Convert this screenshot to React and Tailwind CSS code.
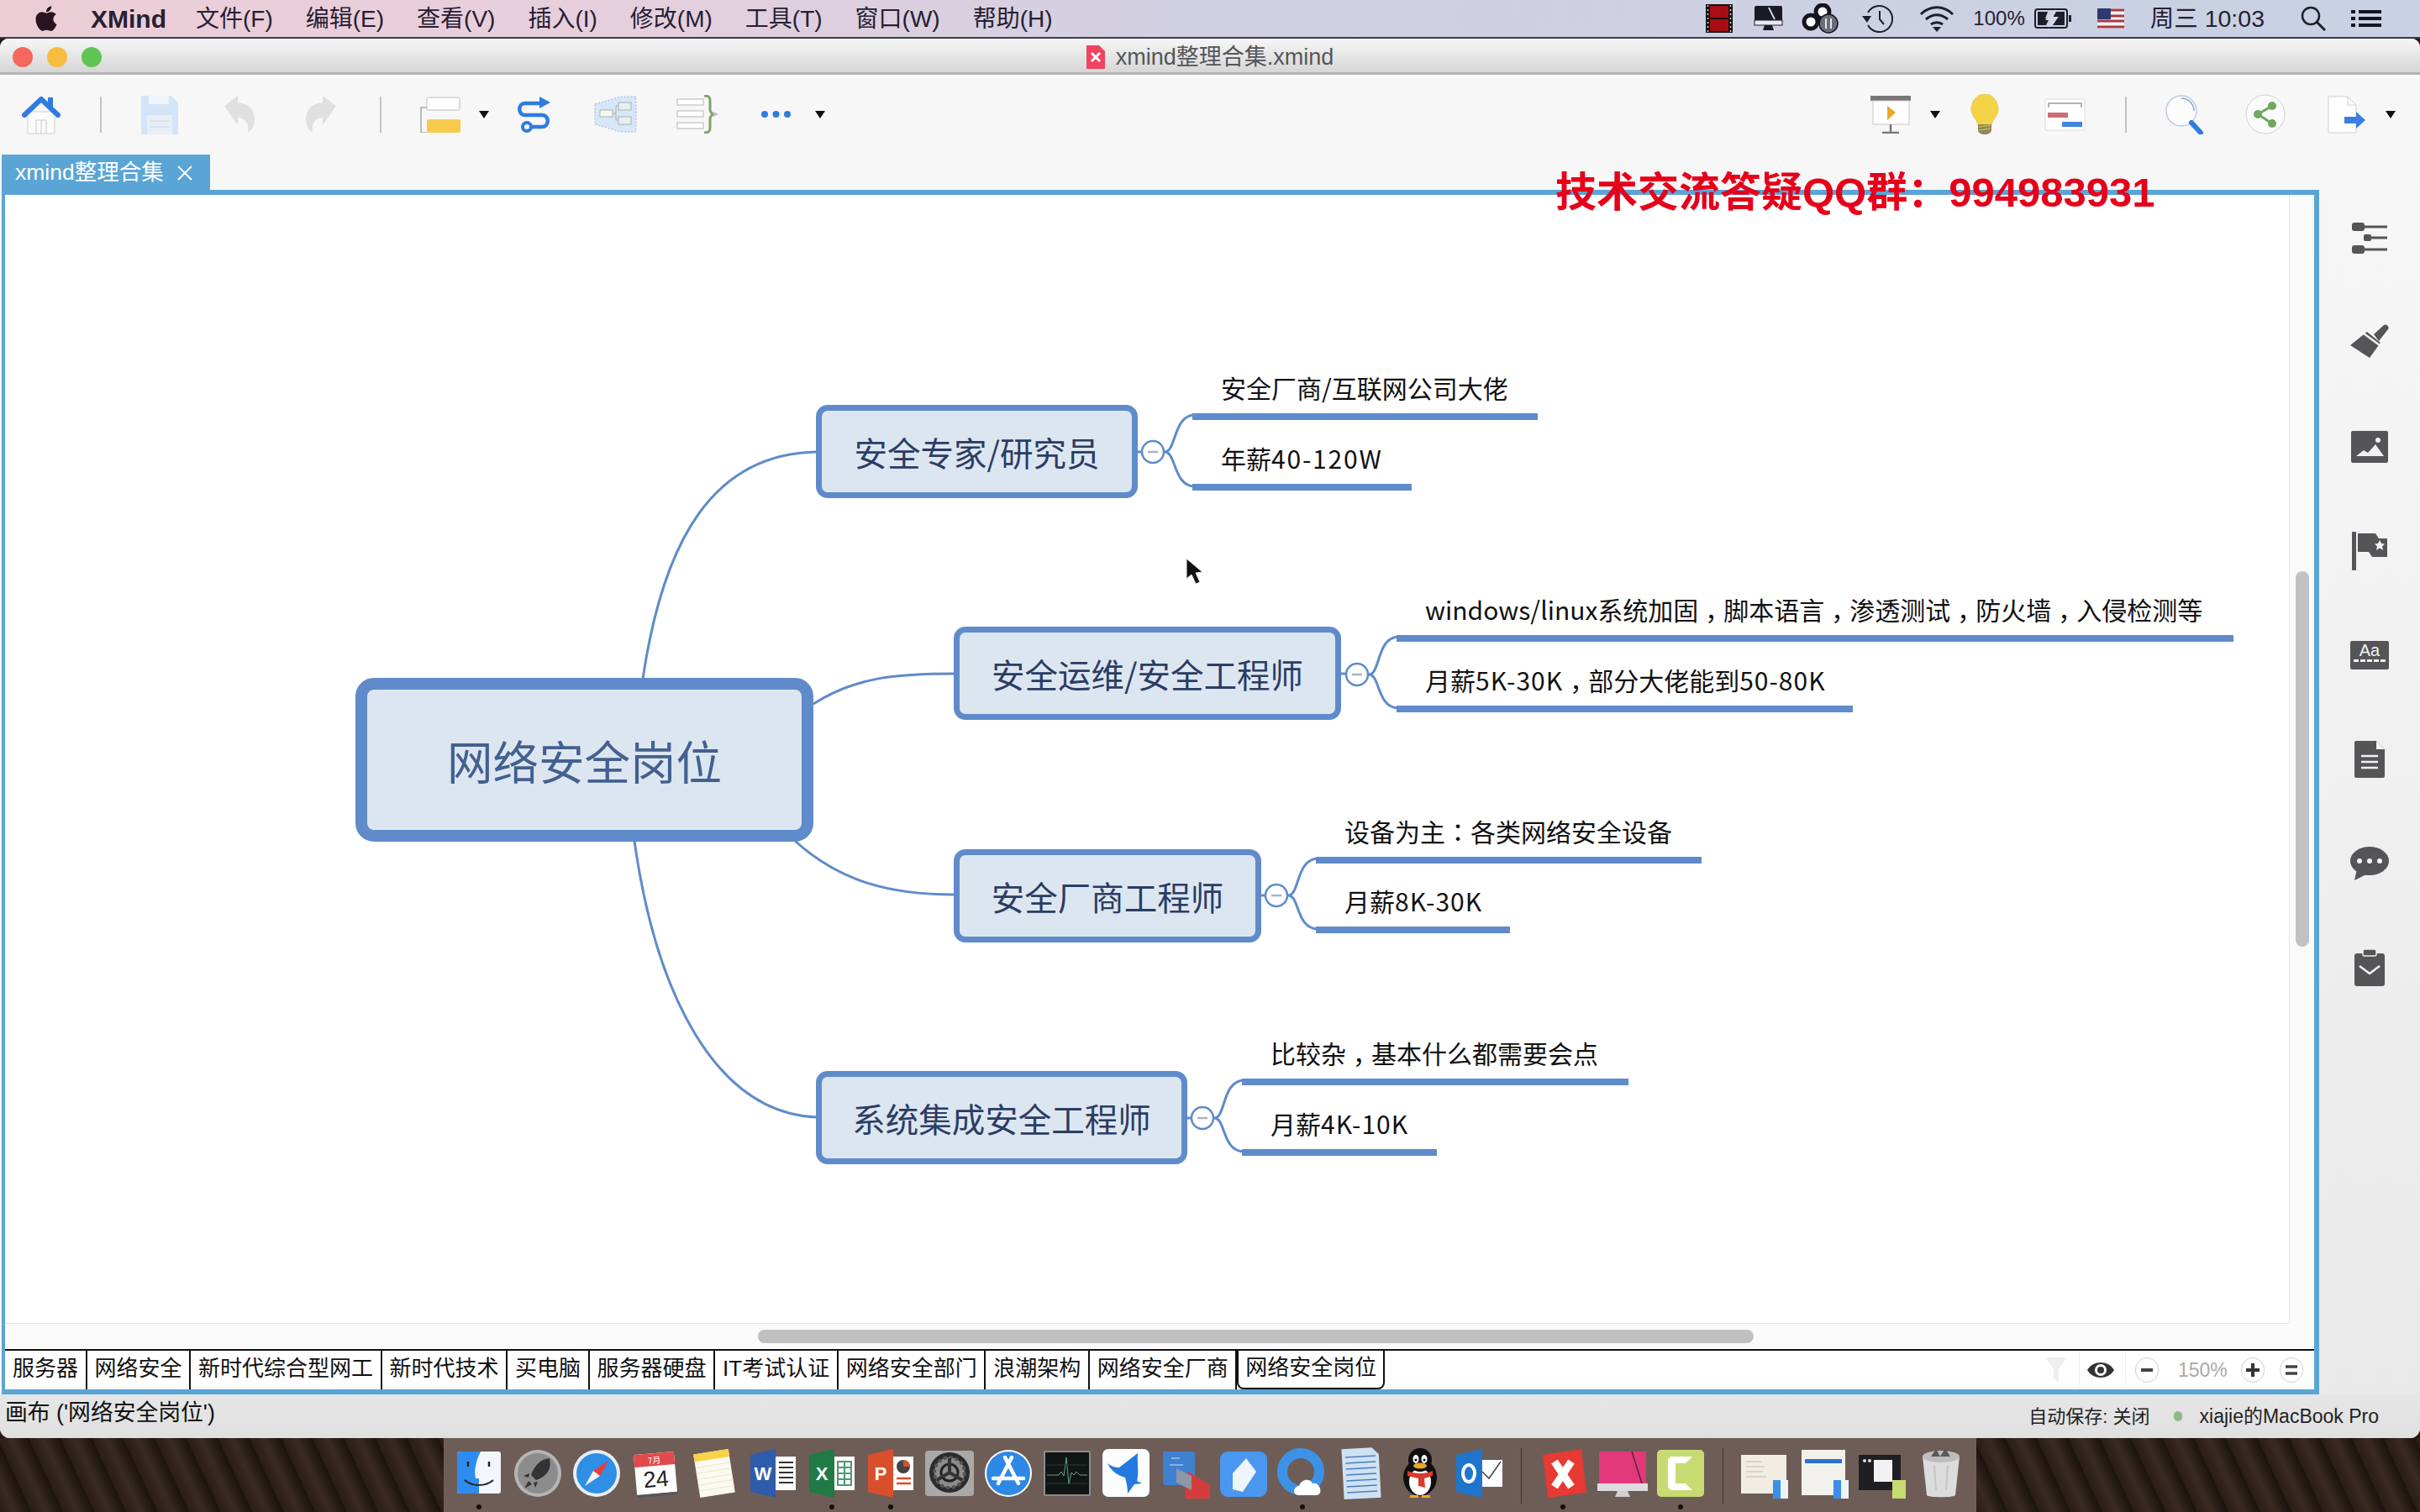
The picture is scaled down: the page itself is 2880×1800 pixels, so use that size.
import React from "react";
import { FaApple } from "react-icons/fa";

const B = "#5f8bca";
const Caret = ({ c = "" }) => (
  <svg width="12" height="10" viewBox="0 0 12 10" className={c}><path d="M0 1h12L6 10z" fill="#111" /></svg>
);
const Sep = ({ c = "" }) => <div className={`w-[2px] h-[43px] bg-[#c4c4c4] ${c}`} />;

const Home = () => (
  <svg width="48" height="47" viewBox="0 0 48 47" className="ml-[25px]">
    <rect x="8" y="20" width="32" height="26" fill="#fbfbfb" stroke="#cfcfcf" />
    <path d="M18 46V30h12v16M24 30v16" fill="none" stroke="#c8c8c8" />
    <rect x="32" y="3" width="6" height="12" fill="#2f7be0" />
    <path d="M4 24 24 5l20 19" fill="none" stroke="#2f7be0" strokeWidth="6" strokeLinecap="round" strokeLinejoin="round" />
  </svg>
);
const Save = () => (
  <svg width="44" height="47" viewBox="0 0 44 47" className="ml-[47px]">
    <path d="M0 1h36l8 8v38H0z" fill="#d4e4f7" />
    <rect x="9" y="1" width="24" height="10" fill="#eef4fb" />
    <rect x="7" y="24" width="30" height="23" fill="#e8eef6" />
    <path d="M10 31h24M10 38h24" stroke="#d4e4f7" strokeWidth="2" />
  </svg>
);
const Undo = ({ flip, c }) => (
  <svg width="36" height="44" viewBox="0 0 36 44" className={c} style={flip ? { transform: "scaleX(-1)" } : undefined}>
    <path d="M0 12 16 0v8c14 1 20 10 20 20 0 7-3 12-8 16 2-9-2-18-12-18v9z" fill="#e0e0e0" />
  </svg>
);
const TableIcon = () => (
  <svg width="48" height="43" viewBox="0 0 48 43" className="ml-[46px]">
    <path d="M8 13H1v30h7" fill="none" stroke="#bbb" strokeWidth="2" />
    <rect x="8" y="1" width="39" height="15" rx="1.5" fill="#fff" stroke="#bdbdbd" />
    <rect x="8" y="27" width="40" height="16" rx="2" fill="#f8cb4e" />
  </svg>
);
const Swirl = () => (
  <svg width="45" height="43" viewBox="0 0 45 43" className="ml-[31px]">
    <path d="M30 8H12C3 8 3 22 12 22h20c9 0 9 14 0 14H18" fill="none" stroke="#2f7be0" strokeWidth="4.5" />
    <path d="M29 0l13 7-13 7z" fill="#2f7be0" />
    <circle cx="14" cy="36" r="5" fill="#fff" stroke="#2f7be0" strokeWidth="4" />
  </svg>
);
const Boundary = () => (
  <svg width="51" height="44" viewBox="0 0 51 44" className="ml-[49px]">
    <path d="M1 10 32 1h18v42H32L1 34z" fill="#d7e6f9" stroke="#9db4d2" strokeWidth="1" strokeDasharray="2 2" />
    <rect x="7" y="17" width="15" height="8" fill="#f4f8f2" stroke="#a3b5a0" />
    <rect x="29" y="8" width="15" height="9" fill="#e7eff4" stroke="#a3b5a0" />
    <rect x="29" y="25" width="15" height="9" fill="#e7eff4" stroke="#a3b5a0" />
    <path d="M22 21h4M26 12v17h3M26 12h3" stroke="#a3b5a0" fill="none" />
  </svg>
);
const Brace = () => (
  <svg width="52" height="46" viewBox="0 0 52 46" className="ml-[47px]">
    <rect x="1" y="5" width="31" height="7" fill="#fff" stroke="#b5b5b5" />
    <rect x="1" y="19" width="31" height="7" fill="#fff" stroke="#b5b5b5" />
    <rect x="1" y="33" width="31" height="7" fill="#fff" stroke="#b5b5b5" />
    <path d="M33 1c6 0 7 2 7 6v10c0 3 2 5 4 6-2 1-4 3-4 6v10c0 4-1 6-7 6" fill="none" stroke="#7fa56a" strokeWidth="3" />
    <path d="M44 20l6 3-6 3z" fill="#bbb" />
  </svg>
);
const Dots = () => (
  <svg width="37" height="10" viewBox="0 0 37 10" className="ml-[48px]">
    <circle cx="5" cy="5" r="4" fill="#2f7be0" /><circle cx="18.5" cy="5" r="4" fill="#2f7be0" /><circle cx="32" cy="5" r="4" fill="#2f7be0" />
  </svg>
);
const Present = () => (
  <svg width="48" height="46" viewBox="0 0 48 46">
    <rect x="0" y="1" width="48" height="6" fill="#777" />
    <rect x="3" y="7" width="43" height="28" fill="#fff" stroke="#c8c8c8" />
    <path d="M20 13l10 8-10 9z" fill="#eda62c" />
    <path d="M24 35v9M14 45h20" stroke="#777" strokeWidth="2.5" />
  </svg>
);
const Bulb = () => (
  <svg width="34" height="48" viewBox="0 0 34 48" className="ml-[36px]">
    <path d="M17 0C7 0 1 9 1 18c0 8 7 12 8 19h16c1-7 8-11 8-19C33 9 27 0 17 0z" fill="#f4d347" stroke="#e8c85a" />
    <path d="M9 36h16v7c0 3-4 5-8 5s-8-2-8-5z" fill="#8e8560" />
    <path d="M10 39l14-2M10 43l14-2" stroke="#c9b04d" strokeWidth="1.5" />
  </svg>
);
const Gantt = () => (
  <svg width="49" height="39" viewBox="0 0 49 39" className="ml-[54px]">
    <rect x="1" y="1" width="47" height="37" rx="2" fill="#fff" stroke="#dcdcdc" />
    <path d="M5 11V6h39v5" fill="none" stroke="#999" strokeWidth="1.5" />
    <rect x="4" y="17" width="24" height="6" fill="#cf6b78" />
    <rect x="21" y="28" width="24" height="6" fill="#3f86de" />
  </svg>
);
const Search2 = () => (
  <svg width="46" height="47" viewBox="0 0 46 47" className="ml-[46px]">
    <circle cx="19" cy="19" r="18" fill="#fdfdfd" stroke="#bdcbe0" strokeWidth="1.5" />
    <path d="M19 4a15 15 0 0 1 15 15" fill="none" stroke="#8aa5c9" strokeWidth="1.5" />
    <path d="M31 33l11 12" stroke="#2f7be0" strokeWidth="6" strokeLinecap="round" />
  </svg>
);
const Share = () => (
  <svg width="48" height="48" viewBox="0 0 48 48" className="ml-[49px]">
    <circle cx="24" cy="24" r="23" fill="#fbfbfb" stroke="#cfcfcf" />
    <path d="M32 14 15 24l17 11" fill="none" stroke="#6fa85e" strokeWidth="3" />
    <circle cx="32" cy="14" r="5" fill="#6fa85e" /><circle cx="15" cy="24" r="5" fill="#6fa85e" /><circle cx="32" cy="35" r="5" fill="#6fa85e" />
  </svg>
);
const ExportI = () => (
  <svg width="46" height="45" viewBox="0 0 46 45" className="ml-[50px]">
    <path d="M1 1h23l10 10v33H1z" fill="#fff" stroke="#cfcfcf" />
    <path d="M24 1v10h10" fill="none" stroke="#cfcfcf" />
    <path d="M20 25h14v-6l11 10-11 10v-6H20z" fill="#3a80e0" />
  </svg>
);

const Film = () => (
  <svg width="32" height="34" viewBox="0 0 32 34">
    <rect width="32" height="34" fill="#111" />
    <rect x="5" y="2" width="22" height="14" fill="#a80d14" /><rect x="5" y="18" width="22" height="14" fill="#a80d14" />
    <path d="M2.5 1v32M29.5 1v32" stroke="#ddd" strokeWidth="1.5" strokeDasharray="2 3" />
  </svg>
);
const IMac = () => (
  <svg width="35" height="30" viewBox="0 0 35 30" className="ml-[25px]">
    <rect x="1" y="0" width="33" height="23" rx="2" fill="#1a1a24" />
    <path d="M18 2l7 14" stroke="#cfd4e4" strokeWidth="2" />
    <rect x="1" y="17" width="33" height="6" fill="#e9e9f0" stroke="#1a1a24" />
    <path d="M13 23h9l2 6H11z" fill="#1a1a24" />
  </svg>
);
const CC = () => (
  <svg width="46" height="36" viewBox="0 0 46 36" className="ml-[22px]">
    <circle cx="25" cy="10" r="8" fill="#fff" stroke="#151520" strokeWidth="5" />
    <circle cx="11" cy="22" r="8" fill="#fff" stroke="#151520" strokeWidth="5" />
    <circle cx="32" cy="24" r="11" fill="#6c6f7a" stroke="#151520" strokeWidth="1.5" />
    <path d="M29 18v12M35 18v12" stroke="#e6e6ee" strokeWidth="2" />
  </svg>
);
const TM = () => (
  <svg width="37" height="34" viewBox="0 0 37 34" className="ml-[26px]">
    <path d="M7 10A15.5 15.5 0 1 1 7 25" fill="none" stroke="#1e1e2a" strokeWidth="2" />
    <path d="M0 14h11l-5 8z" fill="#1e1e2a" />
    <path d="M21 8v10l5 6" fill="none" stroke="#1e1e2a" strokeWidth="2" />
  </svg>
);
const Wifi = () => (
  <svg width="42" height="32" viewBox="0 0 42 32" className="ml-[31px]">
    <path d="M2 11c11-11 27-11 38 0M8 17c8-7 18-7 26 0M14 23c4-3 10-3 14 0" fill="none" stroke="#1e1e2a" strokeWidth="3" />
    <path d="M21 32l-5-6h10z" fill="#1e1e2a" />
  </svg>
);
const Batt = () => (
  <svg width="44" height="24" viewBox="0 0 44 24" className="ml-[11px]">
    <rect x="1" y="1" width="38" height="22" rx="3" fill="none" stroke="#1e1e2a" strokeWidth="2" />
    <rect x="41" y="8" width="3" height="8" fill="#1e1e2a" />
    <path d="M4 4h12l-3 8h5l-4 8H4zM26 4h10v16H22l6-9h-6z" fill="#1e1e2a" />
    <path d="M25 1 13 14h7l-3 9 12-13h-7z" fill="#d5d7e8" />
  </svg>
);
const Flag = () => (
  <svg width="32" height="24" viewBox="0 0 32 24" className="ml-[31px]">
    <rect width="32" height="24" fill="#f2f2f2" />
    <path d="M0 2h32M0 9h32M0 15h32M0 22h32" stroke="#a83a44" strokeWidth="3" />
    <rect width="16" height="13" fill="#2e3a6e" />
  </svg>
);
const MagM = () => (
  <svg width="30" height="30" viewBox="0 0 30 30" className="ml-[43px]">
    <circle cx="12" cy="12" r="10" fill="none" stroke="#1e1e2a" strokeWidth="2.5" />
    <path d="M19 19l10 10" stroke="#1e1e2a" strokeWidth="3" />
  </svg>
);
const ListM = () => (
  <svg width="36" height="20" viewBox="0 0 36 20" className="ml-[30px]">
    <path d="M0 2h5M0 10h5M0 18h5" stroke="#151520" strokeWidth="4" />
    <path d="M9 2h27M9 10h27M9 18h27" stroke="#151520" strokeWidth="4" />
  </svg>
);

const G = "#555558";
const SideIcons = [
  <svg key="1" width="42" height="38" viewBox="0 0 42 38"><rect x="0" y="0" width="15" height="10" rx="3" fill={G} /><rect x="14" y="14" width="9" height="8" rx="2" fill={G} /><rect x="0" y="27" width="15" height="10" rx="3" fill={G} /><path d="M15 5h27M23 18h19M15 32h27" stroke={G} strokeWidth="3" /></svg>,
  <svg key="2" width="46" height="46" viewBox="0 0 46 46"><path d="M0 26 20 10l16 13-13 18z" fill={G} /><path d="M16 12l19 14" stroke="#f2f2f2" strokeWidth="2.5" /><path d="M28 13 40 2c3-2 7 2 5 5L34 21z" fill={G} /></svg>,
  <svg key="3" width="44" height="38" viewBox="0 0 44 38"><rect width="44" height="38" rx="2" fill={G} /><path d="M6 30l9-7 5 3 9-10 10 14z" fill="#f2f2f2" /><circle cx="32" cy="11" r="3" fill="#f2f2f2" /></svg>,
  <svg key="4" width="42" height="46" viewBox="0 0 42 46"><rect width="5" height="46" rx="1" fill={G} /><path d="M7 2h21l4 6h10v22H24l-4-6H7z" fill={G} /><path d="M33 10l2 4 4 .5-3 3 1 4.500-4-2.500-4 2.500 1-4.500-3-3 4-.5z" fill="#f2f2f2" /></svg>,
  <div key="5" className="w-[46px] h-[34px] rounded-[2px] bg-[#555558] flex flex-col items-center text-[#f2f2f2]"><span className="text-[20px] leading-[22px]">Aa</span><span className="w-[38px] border-t-[3px] border-dashed border-[#f2f2f2]" /></div>,
  <svg key="6" width="36" height="44" viewBox="0 0 36 44"><path d="M2 0h24l10 10v32a2 2 0 0 1-2 2H2a2 2 0 0 1-2-2V2a2 2 0 0 1 2-2z" fill={G} /><path d="M26 0v10h10" fill="#f2f2f2" /><path d="M8 18h20M8 25h20M8 32h20" stroke="#f2f2f2" strokeWidth="2.5" /></svg>,
  <svg key="7" width="46" height="40" viewBox="0 0 46 40"><ellipse cx="23" cy="17" rx="23" ry="17" fill={G} /><path d="M8 27 5 40l16-8z" fill={G} /><circle cx="11" cy="17" r="3" fill="#f2f2f2" /><circle cx="23" cy="17" r="3" fill="#f2f2f2" /><circle cx="35" cy="17" r="3" fill="#f2f2f2" /></svg>,
  <svg key="8" width="36" height="44" viewBox="0 0 36 44"><rect y="5" width="36" height="39" rx="3" fill={G} /><rect x="10" y="0" width="16" height="8" rx="2" fill={G} stroke="#f2f2f2" strokeWidth="1.5" /><path d="M6 20l12 9 12-9" fill="none" stroke="#f2f2f2" strokeWidth="2.5" /></svg>,
];

const Finder = <><rect x="4" y="4" width="52" height="50" rx="3" fill="#f3f6fb" /><path d="M4 7a3 3 0 0 1 3-3h25c-6 12-8 22-6 32h4v18H7a3 3 0 0 1-3-3z" fill="#2e8cf0" /><path d="M13 38c9 8 25 8 34 0" fill="none" stroke="#222" strokeWidth="2" /><path d="M17 16v6M42 16v6" stroke="#222" strokeWidth="2.500" /></>;
const Rocket = <><circle cx="30" cy="30" r="28" fill="#b5b5b5" /><circle cx="30" cy="30" r="24" fill="#8c8c8c" /><path d="M44 12c-10 1-18 8-22 20l6 6c12-4 19-12 16-26zM20 30l-7 3 6 2zM30 40l-3 7 -2-6zM19 39l-5 9 9-5z" fill="#333" /></>;
const Safari = <><circle cx="30" cy="30" r="28" fill="#e8eef5" /><circle cx="30" cy="30" r="24" fill="#2f8fe6" /><path d="M44 15 26 27l8 6z" fill="#ee3a3a" /><path d="M16 45l18-12-8-6z" fill="#f5f5f5" /></>;
const Cal = <g transform="rotate(-5 30 30)"><rect x="6" y="6" width="48" height="48" rx="1" fill="#fdfdfd" /><rect x="6" y="6" width="48" height="15" fill="#e24b4b" /><rect x="6" y="54" width="48" height="3" fill="#555" /><text x="30" y="18" textAnchor="middle" fontSize="10" fill="#fff">7月</text><text x="30" y="46" textAnchor="middle" fontSize="27" fill="#222" fontFamily="Liberation Sans">24</text></g>;
const Notes = <g transform="rotate(-9 30 30)"><rect x="9" y="4" width="42" height="52" fill="#fbfaf0" /><rect x="9" y="4" width="42" height="9" fill="#f7d34a" /><path d="M9 20h42M9 27h42M9 34h42M9 41h42M9 48h42" stroke="#ece7cc" /></g>;
const office = (c, t, page) => <><path d="M3 8 33 1v58L3 52z" fill={c} /><rect x="33" y="10" width="24" height="40" fill="#fff" />{page}<text x="18" y="38" textAnchor="middle" fontSize="22" fontWeight="700" fill="#fff" fontFamily="Liberation Sans">{t}</text></>;
const Word = office("#2f5cab", "W", <path d="M37 17h17M37 23h17M37 29h17M37 35h17M37 41h17" stroke="#333" strokeWidth="2" />);
const Excel = office("#1f7a45", "X", <path d="M37 16h16v28H37zM37 23h16M37 30h16M37 37h16M45 16v28" fill="none" stroke="#4a9a70" strokeWidth="2" />);
const PPT = office("#d8502b", "P", <><circle cx="45" cy="22" r="8" fill="#444" /><path d="M45 22v-8a8 8 0 0 1 8 8z" fill="#d8502b" /><path d="M37 36h17M37 42h17" stroke="#d8502b" strokeWidth="2.500" /></>);
const Prefs = <><rect x="1" y="3" width="58" height="54" rx="4" fill="#a9a9a9" /><circle cx="30" cy="29" r="24" fill="#2b2b2b" /><circle cx="30" cy="29" r="18" fill="#8d8d8d" stroke="#555" strokeWidth="4" strokeDasharray="4 3" /><circle cx="30" cy="29" r="10" fill="none" stroke="#222" strokeWidth="3" /><path d="M30 29V12M30 29l15 9M30 29l-15 9" stroke="#333" strokeWidth="4" /></>;
const AppS = <><circle cx="30" cy="30" r="28" fill="#fff" /><circle cx="30" cy="30" r="26" fill="#2e88e6" /><path d="M34 11 18 42M26 11l16 31M12 36h36" stroke="#fff" strokeWidth="4.500" strokeLinecap="round" /></>;
const Activity = <><rect x="2" y="3" width="56" height="54" rx="2" fill="#8c8c8c" /><rect x="4" y="5" width="52" height="50" fill="#101614" /><path d="M6 32h14l3-4 3 5 3-22 3 32 3-14 3 3 3-4 4 4h9" fill="none" stroke="#6e9c8a" /><path d="M6 20h48M6 42h48" stroke="#2a3a34" /></>;
const Bird = <><rect x="2" y="1" width="56" height="57" rx="7" fill="#fbfdff" /><path d="M8 18c5 4 9 5 14 5l22-17c-1 12 2 24-1 33l6 3-9 1-8 11c0-6-1-12-3-19-8-2-17-8-21-17z" fill="#2379e0" /></>;
const Par = <><path d="M4 4h34a4 4 0 0 1 4 4v36H8a4 4 0 0 1-4-4z" fill="#3f80cf" /><path d="M14 12h10M12 20h16" stroke="#85b2e8" strokeWidth="2" /><path d="M34 28 60 44v16H30z" fill="#d63c3c" /><path d="M20 24l18 9v17l-18-9z" fill="#8f96a6" /></>;
const Pencil = <><rect x="2" y="4" width="56" height="54" rx="9" fill="#4a97f0" /><path d="M33 12l12 16-16 24-12-3V30z" fill="#eef5fd" /></>;
const Cloud = <><circle cx="28" cy="28" r="22" fill="none" stroke="#3c92e6" strokeWidth="12" /><path d="M26 56c-8 0-8-10 0-11 2-8 13-10 16-3 9-2 14 14 4 14z" fill="#fff" /></>;
const DocB = <g transform="rotate(-3 30 30)"><path d="M8 0h36l8 8v52H8z" fill="#cfe2f4" /><path d="M12 10h36M12 17h36M12 24h36M12 31h36M12 38h36M12 45h36M12 52h36" stroke="#4e7ebd" strokeWidth="1.500" /></g>;
const QQ = <><ellipse cx="30" cy="35" rx="20" ry="22" fill="#101010" /><ellipse cx="30" cy="40" rx="13" ry="16" fill="#fff" /><ellipse cx="30" cy="14" rx="14" ry="14" fill="#101010" /><ellipse cx="25" cy="13" rx="3.500" ry="5" fill="#fff" /><ellipse cx="35" cy="13" rx="3.500" ry="5" fill="#fff" /><circle cx="25" cy="14" r="1.500" /><circle cx="35" cy="14" r="1.500" /><ellipse cx="30" cy="21" rx="8" ry="3.500" fill="#f1a626" /><path d="M15 27c9 4 21 4 30 0v6l-10 3 1 11-8-2V36l-13-3z" fill="#d93a2b" /><path d="M18 56h10v3H18zM32 56h10v3H32z" fill="#f1a626" /></>;
const Outlook = <><path d="M3 8 34 1v58L3 52z" fill="#1f75cc" /><ellipse cx="18" cy="30" rx="7" ry="10" fill="none" stroke="#fff" strokeWidth="4" /><rect x="34" y="14" width="24" height="32" fill="#fff" /><path d="M34 28l8 8 14-20" fill="none" stroke="#444" strokeWidth="1.500" /></>;
const XM = <><path d="M6 8 52 1l6 52-46 6z" fill="#e63a32" /><path d="M20 16l20 30M40 16 20 46" stroke="#fff" strokeWidth="9" /></>;
const CM = <><rect x="3" y="4" width="56" height="38" fill="#e2397b" /><path d="M42 4l12 38" stroke="#5b2540" strokeWidth="1.500" /><rect x="1" y="42" width="60" height="9" fill="#dcdcdc" /><path d="M25 51h12l3 7H22z" fill="#cfcfcf" /></>;
const Cam = <><rect x="2" y="2" width="56" height="56" rx="5" fill="#c7db73" /><path d="M44 10H20a5 5 0 0 0-5 5v30a5 5 0 0 0 5 5h24l-8-8H24V18h12z" fill="#fff" /></>;
const Thumb1 = <><rect x="2" y="8" width="54" height="46" fill="#f1ece4" /><path d="M8 16h18M8 22h22M8 28h20M8 34h24" stroke="#bbb" /><rect x="40" y="38" width="18" height="22" fill="#3b8fe8" /><rect x="49" y="38" width="9" height="22" fill="#eef3f8" /></>;
const Thumb2 = <><rect x="4" y="2" width="52" height="54" fill="#f3f1ec" /><rect x="8" y="13" width="44" height="5" fill="#2e6fd0" /><rect x="42" y="38" width="18" height="22" fill="#3b8fe8" /><rect x="51" y="38" width="9" height="22" fill="#eef3f8" /></>;
const Thumb3 = <><rect x="2" y="8" width="50" height="42" fill="#1d1f22" /><rect x="20" y="14" width="22" height="26" fill="#f2f2f2" /><circle cx="9" cy="15" r="2" fill="#ddd" /><circle cx="15" cy="15" r="2" fill="#ddd" /><rect x="42" y="38" width="16" height="22" fill="#c7db73" /></>;
const Trash = <><path d="M8 10h44l-5 46c-1 3-33 3-34 0z" fill="#dcdcdc" /><ellipse cx="30" cy="10" rx="22" ry="7" fill="#bdbdbd" /><path d="M18 10l6-9 5 9 6-10 6 10z" fill="#5a5a5a" /><path d="M22 20l2 30M38 20l-2 30" stroke="#c6c6c6" strokeWidth="2" /></>;

const DockI = ({ children, dot }) => (
  <div className="w-[70px] h-[88px] flex flex-col items-center shrink-0">
    <svg width="60" height="60" viewBox="0 0 60 60" className="mt-[12px] shrink-0 overflow-visible">{children}</svg>
    {dot && <span className="mt-[7px] w-[6px] h-[6px] rounded-full bg-[#111]" />}
  </div>
);
const DockSep = () => (
  <div className="w-[30px] h-[88px] flex justify-center pt-[12px] pb-[10px] shrink-0"><div className="w-[1px] bg-[#3d322e]" /></div>
);

const sheets = ["服务器", "网络安全", "新时代综合型网工", "新时代技术", "买电脑", "服务器硬盘", "IT考试认证", "网络安全部门", "浪潮架构", "网络安全厂商"];
const menus = ["文件(F)", "编辑(E)", "查看(V)", "插入(I)", "修改(M)", "工具(T)", "窗口(W)", "帮助(H)"];

const Cm = () => <span className="inline-block translate-y-[9px] font-['Noto_Sans_CJK_TC',sans-serif]">，</span>;
const Colon = () => <span className="font-['Noto_Sans_CJK_TC',sans-serif]">：</span>;
const Leaf = ({ c, children }) => (
  <div className={`absolute h-[52px] pl-[34px] border-b-[8px] border-[#5f8bca] text-[30px] leading-[27px] text-[#111] whitespace-nowrap ${c}`}>{children}</div>
);
const Node = ({ c, t }) => (
  <div className={`absolute h-[111px] flex items-center justify-center rounded-[14px] border-[7px] border-[#5f8bca] bg-[#dce6f1] text-[39.500px] text-[#2b3d63] whitespace-nowrap ${c}`}>{t}</div>
);
const Fold = ({ x, y }) => (
  <g><circle cx={x} cy={y} r="13" fill="#fff" stroke={B} strokeWidth="2.5" /><path d={`M${x - 6} ${y}h12`} stroke="#aab4c4" strokeWidth="2.5" /></g>
);
const Round = ({ children }) => (
  <div className="w-[28px] h-[30px] rounded-full border border-[#cfcfcf] flex items-center justify-center">{children}</div>
);

export default function App() {
  return (
    <div className="w-[2880px] h-[1800px] flex flex-col overflow-hidden relative bg-[#241813] font-['Liberation_Sans','Noto_Sans_CJK_SC',sans-serif]">
      <div className="h-[46px] shrink-0 flex items-center border-b-2 border-[#3a3a4c] bg-[linear-gradient(90deg,#eccdd6_0%,#e6cfdc_25%,#d0d0e2_50%,#c9d1e4_100%)] text-[28px] text-[#262033]">
        <FaApple className="ml-[40px] w-[30px] h-[34px] text-[#2a1420]" />
        <span className="ml-[38px] pt-[2px] text-[30px] leading-[38px] font-bold">XMind</span>
        <div className="ml-[35px] pt-[2px] flex gap-[39px] leading-[38px]">
          {menus.map((m) => <span key={m}>{m}</span>)}
        </div>
        <div className="ml-auto pr-[46px] flex items-center">
          <Film /><IMac /><CC /><TM /><Wifi />
          <span className="ml-[22px] text-[24px]">100%</span>
          <Batt /><Flag />
          <span className="ml-[31px] text-[28.500px]">周三 10:03</span>
          <MagM /><ListM />
        </div>
      </div>

      <div className="h-[1666px] shrink-0 flex flex-col rounded-t-[10px] rounded-b-[12px] overflow-hidden bg-[#f7f7f7]">
        <div className="h-[43px] shrink-0 flex items-center relative pt-[4px] border-b-[3px] border-[#b4b4b4] bg-[linear-gradient(180deg,#f6f6f6,#d6d6d6)]">
          <div className="absolute left-[15px] top-[10px] flex gap-[17px]">
            <span className="w-[24px] h-[24px] rounded-full bg-[#f4685e]" />
            <span className="w-[24px] h-[24px] rounded-full bg-[#f6bd3f]" />
            <span className="w-[24px] h-[24px] rounded-full bg-[#5fc454]" />
          </div>
          <div className="mx-auto flex items-center gap-[13px] text-[27px] text-[#55555a]">
            <svg width="22" height="28" viewBox="0 0 22 28"><path d="M0 0h15l7 7v21H0z" fill="#ef4460" /><path d="M6 9l10 10M16 9 6 19" stroke="#fff" strokeWidth="3" /></svg>
            <span>xmind整理合集.xmind</span>
          </div>
        </div>
        <div className="h-[3px] shrink-0 bg-[#fdfdfd]" />
        <div className="h-[92px] shrink-0 flex items-center pb-[4px] bg-[#f7f7f7]">
          <Home /><Sep c="ml-[46px]" /><Save /><Undo c="ml-[55px]" /><Undo flip c="ml-[61px]" /><Sep c="ml-[52px]" />
          <TableIcon /><Caret c="ml-[22px]" /><Swirl /><Boundary /><Brace /><Dots /><Caret c="ml-[28px]" />
          <div className="ml-auto pr-[29px] flex items-center">
            <Present /><Caret c="ml-[23px]" /><Bulb /><Gantt /><Sep c="ml-[47px]" /><Search2 /><Share /><ExportI /><Caret c="ml-[23px]" />
          </div>
        </div>

        <div className="h-[1476px] shrink-0 flex">
          <div className="w-[2760px] shrink-0 flex flex-col pl-[2px]">
            <div className="h-[42px] shrink-0 flex">
              <div className="w-[248px] h-[42px] flex items-center pt-[2px] bg-[#5aa5d6] text-white text-[26.500px] pl-[16px] gap-[14px]">
                <span>xmind整理合集</span>
                <svg width="22" height="22" viewBox="0 0 22 22"><path d="M3 3l16 16M19 3 3 19" stroke="#fff" strokeWidth="2" /></svg>
              </div>
            </div>
            <div className="h-[1434px] shrink-0 flex flex-col border-t-[6px] border-b-[6px] border-r-[6px] border-l-[4px] border-[#5aa5d6] bg-white">
              <div className="h-[1374px] shrink-0 flex">
                <div className="w-[2719px] shrink-0 flex flex-col">
                  <div className="h-[1344px] shrink-0 relative bg-white border-b border-r border-[#e6e6e6] font-['Noto_Sans_CJK_SC',sans-serif]">
                    <svg width="2719" height="1344" viewBox="6 232 2719 1344" className="absolute left-0 top-0 overflow-hidden" fill="none">
                      <g stroke={B} strokeWidth="3">
                        <path d="M765 808C790 640 850 540 972 538" />
                        <path d="M968 838C1020 805 1070 802 1136 802" />
                        <path d="M946 1001C1000 1050 1060 1065 1136 1065" />
                        <path d="M755 1001C780 1180 850 1325 972 1330" />
                        <path d="M1353 538h6M1386 538C1400 538 1396 494 1422 494M1386 538C1400 538 1396 579 1422 579" />
                        <path d="M1595 802h7M1629 803C1643 803 1638 758 1665 758M1629 803C1643 803 1638 843 1665 843" />
                        <path d="M1500 1066h6M1533 1066C1547 1066 1542 1022 1569 1022M1533 1066C1547 1066 1542 1106 1569 1106" />
                        <path d="M1412 1331h6M1445 1331C1459 1331 1454 1286 1481 1286M1445 1331C1459 1331 1454 1371 1481 1371" />
                      </g>
                      <Fold x={1372} y={538} /><Fold x={1615} y={803} /><Fold x={1519} y={1066} /><Fold x={1431} y={1331} />
                    </svg>
                    <div className="absolute left-[417px] top-[575px] w-[545px] h-[195px] flex items-center justify-center rounded-[22px] border-[14px] border-[#5f8bca] bg-[#dce6f1] text-[54.500px] text-[#44608f]">网络安全岗位</div>
                    <Node c="left-[965px] top-[250px] w-[383px]" t="安全专家/研究员" />
                    <Node c="left-[1129px] top-[514px] w-[461px]" t="安全运维/安全工程师" />
                    <Node c="left-[1129px] top-[779px] w-[366px]" t="安全厂商工程师" />
                    <Node c="left-[965px] top-[1043px] w-[442px]" t="系统集成安全工程师" />
                    <Leaf c="left-[1413px] top-[216px] w-[411px]">安全厂商/互联网公司大佬</Leaf>
                    <Leaf c="left-[1413px] top-[300px] w-[261px]">年薪<span className="tracking-[1.800px]">40-120W</span></Leaf>
                    <Leaf c="left-[1656px] top-[480px] w-[996px]">windows/linux系统加固<Cm />脚本语言<Cm />渗透测试<Cm />防火墙<Cm />入侵检测等</Leaf>
                    <Leaf c="left-[1656px] top-[564px] w-[543px]">月薪<span className="tracking-[1px]">5K-30K</span><Cm />部分大佬能到<span className="tracking-[1px]">50-80K</span></Leaf>
                    <Leaf c="left-[1560px] top-[744px] w-[459px]">设备为主<Colon />各类网络安全设备</Leaf>
                    <Leaf c="left-[1560px] top-[827px] w-[231px]">月薪<span className="tracking-[1px]">8K-30K</span></Leaf>
                    <Leaf c="left-[1472px] top-[1008px] w-[460px]">比较杂<Cm />基本什么都需要会点</Leaf>
                    <Leaf c="left-[1472px] top-[1092px] w-[232px]">月薪<span className="tracking-[1px]">4K-10K</span></Leaf>
                    <svg width="22" height="32" viewBox="0 0 22 32" className="absolute left-[1404px] top-[432px]">
                      <path d="M2 1v24l6-5 5 11 5-2-5-11 8-1z" fill="#111" stroke="#eee" strokeWidth="1" />
                    </svg>
                  </div>
                  <div className="h-[30px] shrink-0 bg-[#fafafa] flex items-center">
                    <div className="ml-[896px] w-[1185px] h-[16px] rounded-full bg-[#c0c0c0]" />
                  </div>
                </div>
                <div className="w-[29px] shrink-0 bg-[#fafafa] pt-[448px] pl-[7px]">
                  <div className="w-[16px] h-[447px] rounded-full bg-[#c2c2c2]" />
                </div>
              </div>
              <div className="h-[48px] shrink-0 flex border-t-2 border-[#111] bg-white text-[26px] text-[#111]">
                {sheets.map((s) => (
                  <div key={s} className="h-[46px] pl-[9px] pr-[8.500px] pb-[4px] flex items-center border-r-2 border-[#111] whitespace-nowrap">{s}</div>
                ))}
                <div className="h-[46px] px-[8px] pb-[4px] flex items-center border-x-2 border-b-2 border-[#111] rounded-b-[8px] whitespace-nowrap">网络安全岗位</div>
                <div className="ml-auto flex items-center pr-[13px] text-[#aaa]">
                  <svg width="26" height="32" viewBox="0 0 26 32"><path d="M0 1h26L16 15v16l-6-5V15z" fill="#eee" /></svg>
                  <div className="ml-[14px] w-[1px] h-[44px] bg-[#eee]" />
                  <svg width="34" height="28" viewBox="0 0 34 28" className="ml-[8px]"><path d="M1 14C8 2 26 2 33 14 26 26 8 26 1 14z" fill="#333" /><circle cx="17" cy="14" r="7" fill="#fff" /><circle cx="17" cy="14" r="4" fill="#333" /></svg>
                  <div className="ml-[12px] w-[1px] h-[44px] bg-[#eee]" />
                  <div className="ml-[11px]"><Round><span className="w-[14px] h-[4px] bg-[#444]" /></Round></div>
                  <span className="ml-[23px] text-[23px] w-[62px]">150%</span>
                  <div className="ml-[13px]"><Round><svg width="18" height="18" viewBox="0 0 18 18"><path d="M9 1v16M1 9h16" stroke="#333" strokeWidth="4" /></svg></Round></div>
                  <div className="ml-[18px]"><Round><svg width="16" height="12" viewBox="0 0 16 12"><path d="M1 2h14M1 10h14" stroke="#444" strokeWidth="3.500" /></svg></Round></div>
                </div>
              </div>
            </div>
          </div>
          <div className="flex-1 flex flex-col items-center pt-[38px] bg-[linear-gradient(180deg,#f7f7f7,#e9e9e9)]">
            {SideIcons.map((ic, i) => (
              <div key={i} className="h-[124px] w-full flex items-center justify-center shrink-0">{ic}</div>
            ))}
          </div>
        </div>

        <div className="h-[52px] shrink-0 flex items-center bg-[linear-gradient(180deg,#e6e6e6,#e0e0e0)] text-[#111]">
          <span className="ml-[6px] text-[26.800px] pb-[8px]">画布 ('网络安全岗位')</span>
          <div className="ml-auto flex items-center pr-[49px] text-[23px] text-[#222]">
            <span className="text-[22px]">自动保存: 关闭</span>
            <span className="ml-[28px] w-[10px] h-[12px] rounded-full bg-[#8fb98a]" />
            <span className="ml-[21px]">xiajie的MacBook Pro</span>
          </div>
        </div>
      </div>

      <div className="flex-1 flex bg-[#241813]">
        <div className="w-[528px] h-[88px] shrink-0 bg-[repeating-linear-gradient(65deg,#2a1c17_0px,#3a2a24_16px,#1c120e_34px)]" />
        <div className="w-[1824px] h-[88px] shrink-0 flex pl-[7px] bg-[#6e5d57] font-['Noto_Sans_CJK_SC',sans-serif]">
          <DockI dot>{Finder}</DockI><DockI>{Rocket}</DockI><DockI>{Safari}</DockI><DockI>{Cal}</DockI><DockI>{Notes}</DockI>
          <DockI>{Word}</DockI><DockI dot>{Excel}</DockI><DockI dot>{PPT}</DockI><DockI>{Prefs}</DockI><DockI>{AppS}</DockI>
          <DockI>{Activity}</DockI><DockI>{Bird}</DockI><DockI>{Par}</DockI><DockI>{Pencil}</DockI><DockI dot>{Cloud}</DockI>
          <DockI>{DocB}</DockI><DockI>{QQ}</DockI><DockI>{Outlook}</DockI>
          <DockSep />
          <DockI dot>{XM}</DockI><DockI>{CM}</DockI><DockI dot>{Cam}</DockI>
          <DockSep />
          <DockI>{Thumb1}</DockI><DockI>{Thumb2}</DockI><DockI>{Thumb3}</DockI><DockI>{Trash}</DockI>
        </div>
        <div className="flex-1 h-[88px] bg-[repeating-linear-gradient(65deg,#2a1c17_0px,#3a2a24_16px,#1c120e_34px)]" />
      </div>

      <div className="absolute left-[1851px] top-[198px] text-[49px] leading-[62px] font-bold text-[#e6001a] whitespace-nowrap">技术交流答疑QQ群：994983931</div>
    </div>
  );
}
